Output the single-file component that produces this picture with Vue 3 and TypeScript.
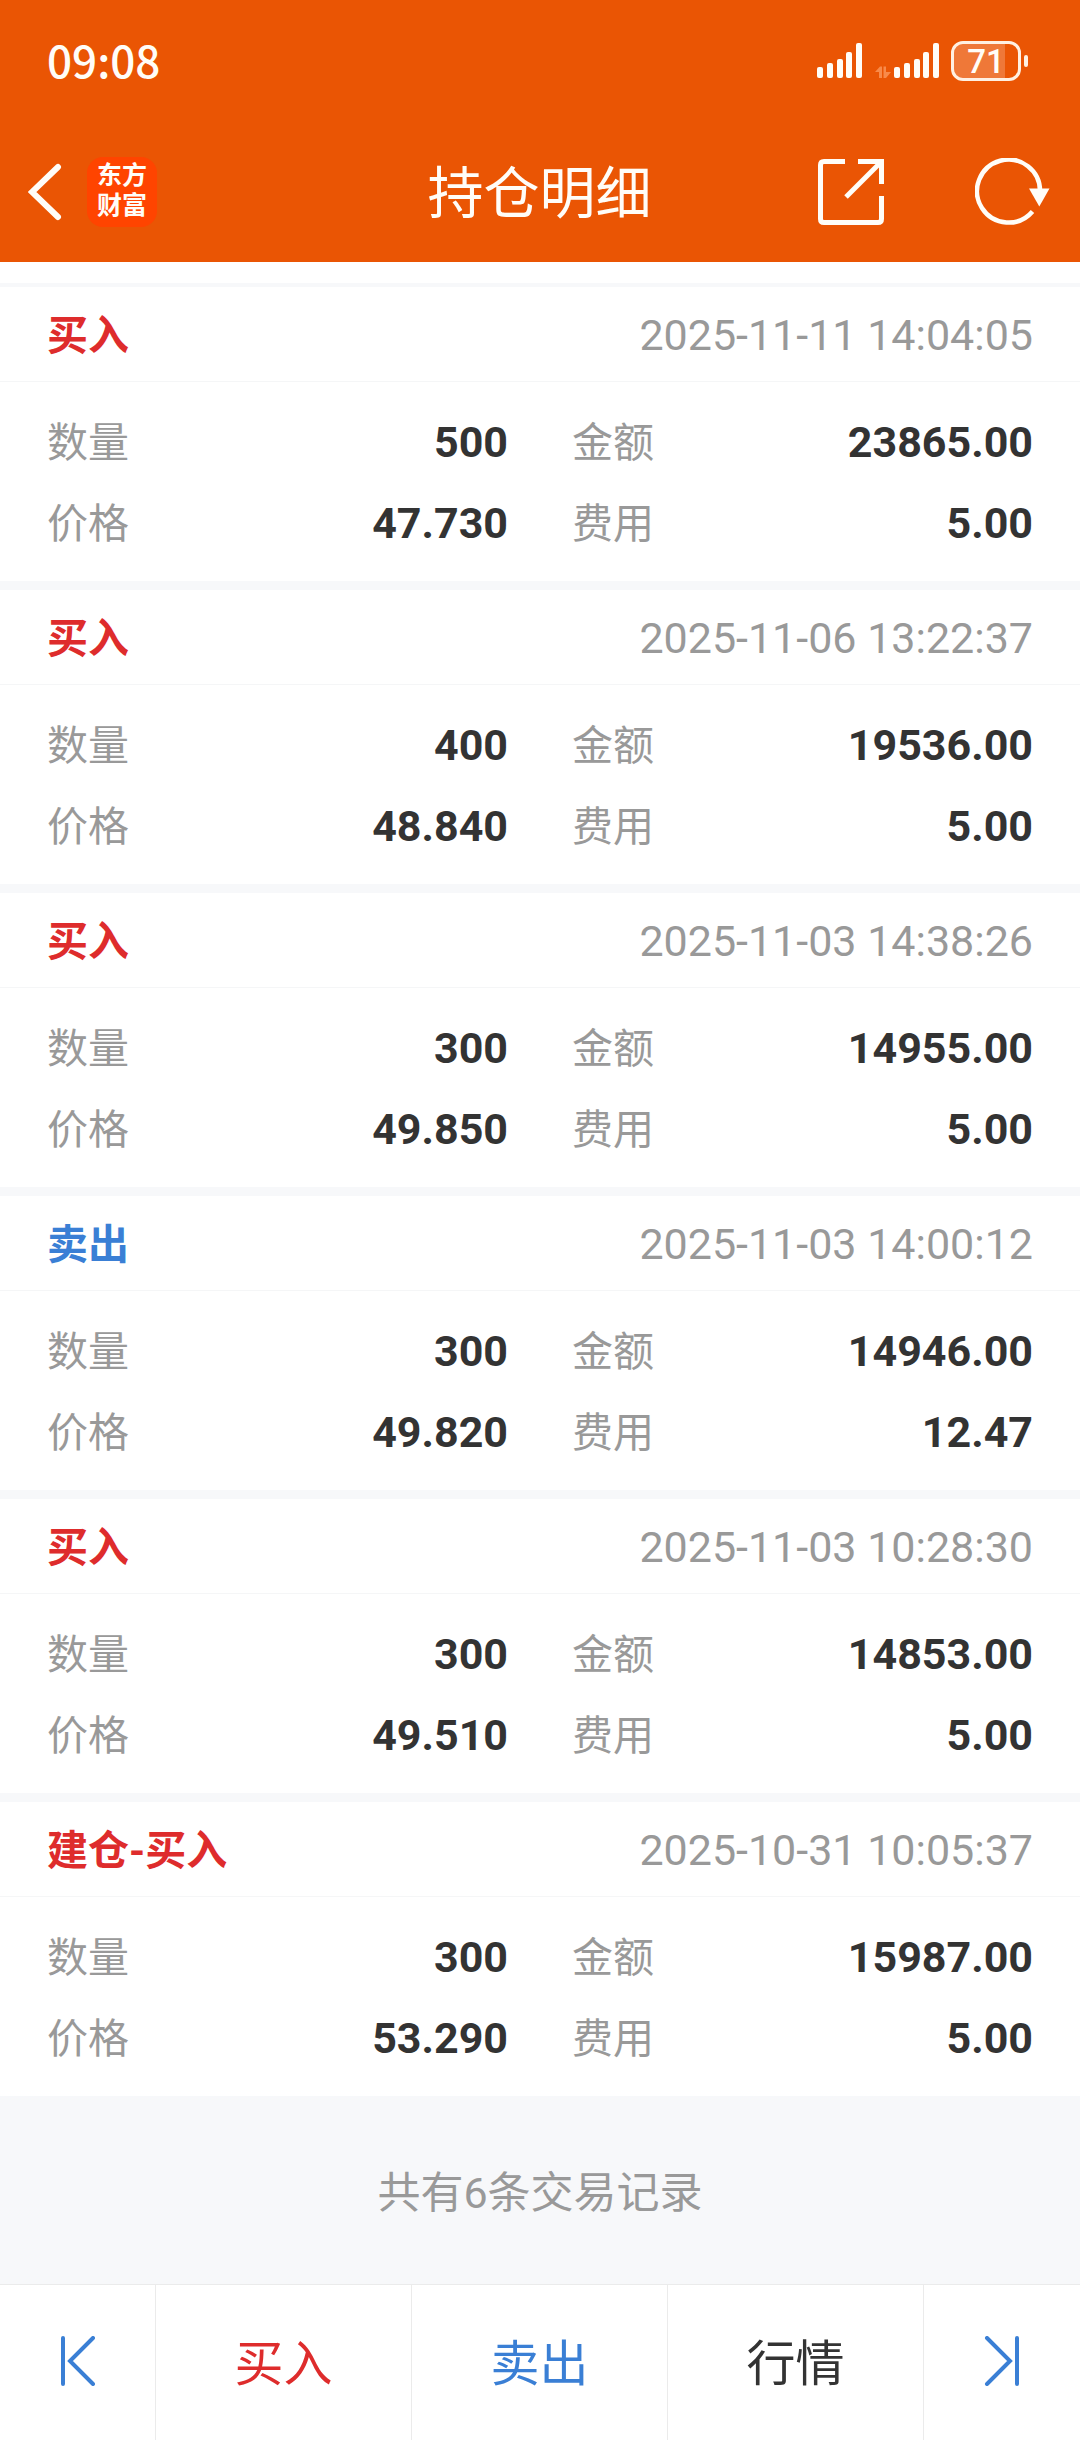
<script setup lang="ts">
interface TradeRecord {
  side: 'buy' | 'sell'
  label: string
  time: string
  quantity: string
  amount: string
  price: string
  fee: string
}

const records: TradeRecord[] = [
  { side: 'buy', label: '买入', time: '2025-11-11 14:04:05', quantity: '500', amount: '23865.00', price: '47.730', fee: '5.00' },
  { side: 'buy', label: '买入', time: '2025-11-06 13:22:37', quantity: '400', amount: '19536.00', price: '48.840', fee: '5.00' },
  { side: 'buy', label: '买入', time: '2025-11-03 14:38:26', quantity: '300', amount: '14955.00', price: '49.850', fee: '5.00' },
  { side: 'sell', label: '卖出', time: '2025-11-03 14:00:12', quantity: '300', amount: '14946.00', price: '49.820', fee: '12.47' },
  { side: 'buy', label: '买入', time: '2025-11-03 10:28:30', quantity: '300', amount: '14853.00', price: '49.510', fee: '5.00' },
  { side: 'buy', label: '建仓-买入', time: '2025-10-31 10:05:37', quantity: '300', amount: '15987.00', price: '53.290', fee: '5.00' },
]
</script>

<template>
  <div class="page">
    <header class="header">
      <div class="status">
        <span class="clock">09:08</span>
        <div class="indicators">
          <svg class="signal" width="46" height="36" viewBox="0 0 46 36" aria-hidden="true">
            <g fill="currentColor">
              <rect x="0" y="24" width="6" height="11" rx="2" />
              <rect x="10" y="20" width="6" height="15" rx="2" />
              <rect x="20" y="16" width="6" height="19" rx="2" />
              <rect x="29" y="9" width="6" height="26" rx="2" />
              <rect x="39" y="0" width="6" height="35" rx="2" />
            </g>
          </svg>
          <svg class="signal data" width="66" height="36" viewBox="0 0 66 36" aria-hidden="true">
            <path d="M0 29 L5 23.500 H7 V35 H4 V29 Z M8.500 23.500 H11 V29 H16 L11 35 H8.500 Z" fill="#f88a4a" />
            <g fill="currentColor">
              <rect x="19" y="24" width="6" height="11" rx="2" />
              <rect x="29" y="20" width="6" height="15" rx="2" />
              <rect x="39" y="16" width="6" height="19" rx="2" />
              <rect x="48" y="9" width="6" height="26" rx="2" />
              <rect x="58" y="0" width="6" height="35" rx="2" />
            </g>
          </svg>
          <div class="battery">
            <span class="battery-body">71</span>
            <span class="battery-tip"></span>
          </div>
        </div>
      </div>

      <div class="titlebar">
        <div class="side">
          <button class="icon-button back" type="button" aria-label="返回">
            <svg width="34" height="58" viewBox="0 0 34 58">
              <path d="M30 4 L4 29 L30 54" fill="none" stroke="currentColor" stroke-width="6" stroke-linecap="round" stroke-linejoin="miter" />
            </svg>
          </button>
          <div class="logo"><span>东方</span><span>财富</span></div>
        </div>
        <h1 class="title">持仓明细</h1>
        <div class="side actions">
          <button class="icon-button" type="button" aria-label="分享">
            <svg width="66" height="66" viewBox="0 0 66 66">
              <g fill="none" stroke="currentColor" stroke-width="5">
                <path d="M27 2.500 H6 Q2.500 2.500 2.500 6 V60 Q2.500 63.500 6 63.500 H60 Q63.500 63.500 63.500 60 V37" />
                <path d="M40 2.500 H63.500 V25" />
                <path d="M28 38 L62 4" />
              </g>
            </svg>
          </button>
          <button class="icon-button" type="button" aria-label="刷新">
            <svg width="76" height="68" viewBox="0 0 76 68">
              <path d="M57.500 53.500 A31.500 31.500 0 1 1 65 34" fill="none" stroke="currentColor" stroke-width="4.500" />
              <path d="M54 30.500 H74.500 L64.300 48.500 Z" fill="currentColor" />
            </svg>
          </button>
        </div>
      </div>
    </header>

    <main class="records">
      <article v-for="record in records" :key="record.time" class="record">
        <header class="record-head">
          <h2 :class="['record-side', record.side]">{{ record.label }}</h2>
          <time class="record-time">{{ record.time }}</time>
        </header>
        <dl class="record-body">
          <div class="field"><dt>数量</dt><dd>{{ record.quantity }}</dd></div>
          <div class="field"><dt>金额</dt><dd>{{ record.amount }}</dd></div>
          <div class="field"><dt>价格</dt><dd>{{ record.price }}</dd></div>
          <div class="field"><dt>费用</dt><dd>{{ record.fee }}</dd></div>
        </dl>
      </article>
    </main>

    <p class="summary">共有{{ records.length }}条交易记录</p>

    <nav class="tabs">
      <button class="tab edge" type="button" aria-label="上一个">
        <svg width="36" height="50" viewBox="0 0 36 50">
          <path d="M3 2 V48 M33 2 L10 25 L33 48" fill="none" stroke="currentColor" stroke-width="4" stroke-linecap="round" />
        </svg>
      </button>
      <button class="tab buy" type="button">买入</button>
      <button class="tab sell" type="button">卖出</button>
      <button class="tab" type="button">行情</button>
      <button class="tab edge" type="button" aria-label="下一个">
        <svg width="36" height="50" viewBox="0 0 36 50">
          <path d="M33 2 V48 M3 2 L26 25 L3 48" fill="none" stroke="currentColor" stroke-width="4" stroke-linecap="round" />
        </svg>
      </button>
    </nav>
  </div>
</template>

<style>
body {
  margin: 0;
  background: #f7f8fa;
}
</style>

<style scoped>
.page {
  display: flex;
  flex-direction: column;
  min-height: 100vh;
  font-family: Roboto, "Noto Sans CJK SC", sans-serif;
  color: #333;
  background: #f7f8fa;
}

.page * {
  box-sizing: border-box;
}

button {
  margin: 0;
  padding: 0;
  border: 0;
  background: none;
  font: inherit;
  color: inherit;
  cursor: pointer;
}

svg {
  display: block;
}

.header {
  color: #fffdf8;
  background: #ea5504;
}

.status {
  display: flex;
  align-items: center;
  justify-content: space-between;
  height: 122px;
  padding: 0 52px 0 47px;
}

.clock {
  padding-bottom: 4px;
  font-family: "Noto Sans CJK SC", sans-serif;
  font-size: 44px;
  font-weight: 500;
  line-height: 56px;
}

.indicators {
  display: flex;
  align-items: center;
}

.data {
  margin: 0 10px 0 12px;
}

.battery {
  display: flex;
  align-items: center;
  gap: 3px;
}

.battery-body {
  width: 70px;
  height: 40px;
  border: 3px solid #fff0e2;
  border-radius: 12px;
  background: linear-gradient(90deg, #ef7838 80%, transparent 80%) padding-box;
  font-size: 33px;
  font-weight: 500;
  line-height: 35px;
  text-align: center;
}

.battery-tip {
  width: 4px;
  height: 12px;
  border-radius: 2px;
  background: #fff0e2;
}

.titlebar {
  display: flex;
  align-items: center;
  height: 140px;
  padding: 0 29px 0 28px;
}

.side {
  display: flex;
  flex: 1;
  align-items: center;
}

.actions {
  justify-content: flex-end;
  gap: 91px;
}

.back {
  margin-right: 25px;
}

.logo {
  display: flex;
  flex-direction: column;
  align-items: center;
  justify-content: center;
  width: 70px;
  height: 70px;
  padding-bottom: 2px;
  border-radius: 16px;
  background: #ff4400;
  font-size: 25px;
  font-weight: 700;
  line-height: 30px;
}

.title {
  margin: 0;
  padding-top: 4px;
  font-size: 56px;
  font-weight: 400;
  line-height: 80px;
}

.records {
  display: flex;
  flex-direction: column;
  gap: 9px;
  padding-top: 4px;
  border-top: 21px solid #fff;
}

.record {
  background: #fff;
}

.record-head {
  display: flex;
  align-items: center;
  justify-content: space-between;
  height: 95px;
  padding: 3px 47px 0;
  border-bottom: 1px solid #f5f6f7;
}

.record-side {
  margin: 0;
  font-size: 41px;
  font-weight: 700;
  line-height: 60px;
}

.record-time {
  padding-bottom: 2px;
  font-size: 43px;
  line-height: 60px;
  color: #999;
}

.buy {
  color: #de2c2c;
}

.sell {
  color: #3a7fd5;
}

.record-body {
  display: grid;
  grid-template-columns: 1fr 1fr;
  column-gap: 64px;
  margin: 0;
  padding: 20px 47px 17px;
}

.field {
  display: flex;
  align-items: center;
  justify-content: space-between;
  height: 81px;
}

.field dt {
  font-size: 41px;
  line-height: 60px;
  color: #999;
}

.field dd {
  margin: 0;
  padding-bottom: 2px;
  font-size: 43px;
  font-weight: 700;
  line-height: 60px;
}

.summary {
  display: flex;
  flex: 1;
  align-items: center;
  justify-content: center;
  min-height: 188px;
  margin: 0;
  padding-top: 6px;
  font-size: 43px;
  line-height: 60px;
  color: #999;
}

.tabs {
  display: flex;
  height: 156px;
  border-top: 1px solid #ebebeb;
  background: #fff;
}

.tab {
  display: flex;
  flex: 1;
  align-items: center;
  justify-content: center;
  padding-top: 4px;
  font-size: 49px;
  line-height: 72px;
}

.tab:not(:last-child) {
  border-right: 1px solid #ebebeb;
}

.edge {
  flex: 0 0 156px;
  padding: 0 0 4px;
  color: #3a7fd5;
}
</style>
